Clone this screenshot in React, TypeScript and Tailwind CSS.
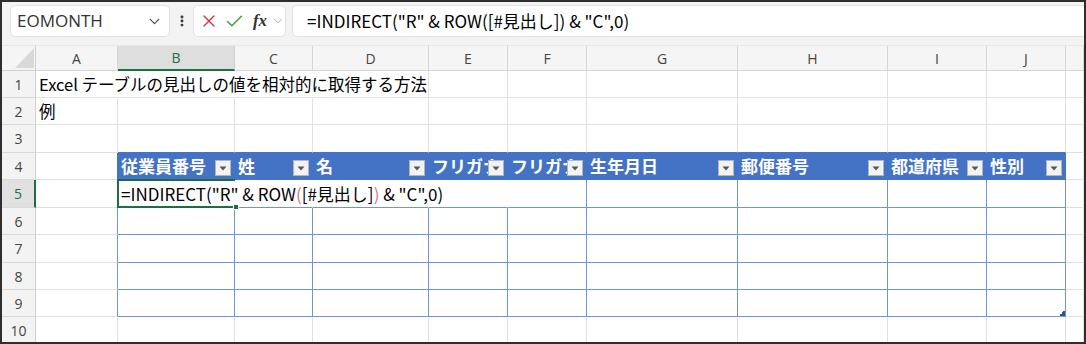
import { ChevronDown, X, Check, EllipsisVertical } from 'lucide-react';

const COLS = [
  { id: 'A', w: 'w-[82px]' },
  { id: 'B', w: 'w-[117px]' },
  { id: 'C', w: 'w-[78px]' },
  { id: 'D', w: 'w-[116px]' },
  { id: 'E', w: 'w-[79px]' },
  { id: 'F', w: 'w-[79px]' },
  { id: 'G', w: 'w-[151px]' },
  { id: 'H', w: 'w-[150px]' },
  { id: 'I', w: 'w-[99px]' },
  { id: 'J', w: 'w-[79px]' },
  { id: '', w: 'flex-1' },
];

const ROW_H = [
  'h-[27px]', 'h-[27px]', 'h-[28px]', 'h-[27px]', 'h-[28px]',
  'h-[27px]', 'h-[28px]', 'h-[27px]', 'h-[27px]', 'h-[27px]',
];

const HEADERS = ['従業員番号', '姓', '名', 'フリガナ', 'フリガナ', '生年月日', '郵便番号', '都道府県', '性別'];

function FilterButton() {
  return (
    <div className="absolute right-[3px] top-[7px] w-[16px] h-[16px] bg-[#f2f2f2] border border-[#b4b4b4] flex items-center justify-center">
      <svg width="8" height="5" viewBox="0 0 8 5">
        <polygon points="0.5,0.5 7.5,0.5 4,4.5" fill="#555" />
      </svg>
    </div>
  );
}

function borders(r: number, c: number) {
  const inTable = r >= 4 && r <= 9 && c >= 1 && c <= 9;
  let right = 'border-r-[#e1e1e1]';
  let bottom = 'border-b-[#e1e1e1]';
  if (inTable) {
    if (r === 4) {
      right = 'border-r-[#4472c4]';
      bottom = 'border-b-[#4472c4]';
    } else {
      right = 'border-r-[#7094d8]';
      bottom = 'border-b-[#7094d8]';
    }
  }
  if (c === 0 && r >= 4 && r <= 9) right = r === 4 ? 'border-r-[#4472c4]' : 'border-r-[#7094d8]';
  if (r === 3 && c >= 1 && c <= 9) bottom = 'border-b-[#4472c4]';
  if (r === 1 && c <= 2) right = 'border-r-transparent';
  if (r === 5 && c >= 1 && c <= 4) right = 'border-r-transparent';
  return right + ' ' + bottom;
}

function Cell({ r, c }: { r: number; c: number }) {
  const col = COLS[c];
  const base = `${col.w} shrink-0 h-full border-r border-b ${borders(r, c)} relative flex items-center`;

  if (r === 4 && c >= 1 && c <= 9) {
    return (
      <div className={`${base} bg-[#4472c4] overflow-hidden`}>
        <span className="pl-[3px] text-white font-bold text-[17px] whitespace-nowrap">{HEADERS[c - 1]}</span>
        <FilterButton />
      </div>
    );
  }

  if (r === 1 && c === 0) {
    return (
      <div className={`${base} z-10`}>
        <span className="pl-[3px] text-[16.5px] text-black whitespace-nowrap">Excel テーブルの見出しの値を相対的に取得する方法</span>
      </div>
    );
  }

  if (r === 2 && c === 0) {
    return (
      <div className={base}>
        <span className="pl-[3px] text-[16.5px] text-black">例</span>
      </div>
    );
  }

  if (r === 5 && c === 1) {
    return (
      <div className={`${base} z-10 bg-white`}>
        <span className="pl-[3px] text-[17px] text-black whitespace-nowrap">
          =INDIRECT("R" &amp; ROW<span className="text-[#e0708c]">(</span>[#見出し]<span className="text-[#e0708c]">)</span> &amp; "C",0)
        </span>
        <div className="absolute left-[-1px] top-[-1px] w-[118px] h-[29px] border-2 border-r-0 border-[#1d6f42] pointer-events-none">
          <div className="absolute right-[-4px] bottom-[-4px] w-[6px] h-[6px] bg-[#1d6f42] border border-white" />
        </div>
      </div>
    );
  }

  if (r === 9 && c === 9) {
    return (
      <div className={`${base} bg-white`}>
        <svg className="absolute right-[0px] bottom-[0px]" width="5" height="5" viewBox="0 0 5 5">
          <polygon points="5,0 5,5 0,5 0,3 2,3 2,1 3,1 3,0" fill="#2f4f9f" />
        </svg>
      </div>
    );
  }

  return <div className={`${base} ${r >= 5 && r <= 9 && c >= 1 && c <= 9 ? 'bg-white' : ''}`} />;
}

export default function App() {
  return (
    <div className="w-[1086px] h-[344px] border-2 border-[#2e2e2e] overflow-hidden bg-white flex flex-col font-['Noto_Sans_CJK_JP','Noto_Sans',sans-serif]">
      {/* formula bar */}
      <div className="h-[44px] shrink-0 bg-[#f3f3f3] flex items-start pt-[3px] pl-[8px] border-b border-[#e4e8ec]">
        <div className="w-[160px] h-[32px] bg-white border border-[#e2e2e2] rounded-[5px] flex items-center pl-[6px] pr-[6px] justify-between">
          <span className="text-[17px] text-[#333] font-['Open_Sans',sans-serif]">EOMONTH</span>
          <ChevronDown size={17} strokeWidth={1.6} className="text-[#444]" />
        </div>
        <div className="w-[23px] h-[32px] flex items-center justify-center text-[#333]">
          <EllipsisVertical size={14} strokeWidth={3} />
        </div>
        <div className="w-[93px] h-[32px] bg-white border border-[#e2e2e2] rounded-[5px] flex items-center pl-[5px]">
          <X size={20} strokeWidth={1.6} className="text-[#d13438]" />
          <Check size={21} strokeWidth={1.6} className="text-[#3c9b3c] ml-[5px]" />
          <span className="ml-[8px] text-[17px] text-[#333] font-bold italic font-['Liberation_Serif',serif]">fx</span>
          <ChevronDown size={14} strokeWidth={1.5} className="text-[#999] ml-[4px]" />
        </div>
        <div className="flex-1 h-[32px] ml-[6px] bg-white border border-r-0 border-[#e2e2e2] rounded-l-[5px] flex items-center pl-[14px]">
          <span className="text-[17px] text-black whitespace-nowrap">=INDIRECT("R" &amp; ROW([#見出し]) &amp; "C",0)</span>
        </div>
      </div>

      {/* column headers */}
      <div className="h-[25px] shrink-0 flex bg-[#f5f5f5]">
        <div className="w-[34px] shrink-0 h-full border-r border-b border-[#d0d0d0] relative">
          <svg className="absolute left-[13px] top-[2px]" width="19" height="20" viewBox="0 0 19 20">
            <polygon points="19,0 19,20 0,20" fill="#d9d9d9" />
          </svg>
        </div>
        {COLS.map((col, i) => (
          <div
            key={i}
            className={`${col.w} shrink-0 h-full flex items-center justify-center text-[14px] font-['Open_Sans',sans-serif] ${
              col.id === 'B'
                ? 'bg-[#dedede] text-[#1d6f42] border-r border-r-[#d0d0d0] border-b-2 border-b-[#1d6f42]'
                : 'text-[#444] border-r border-b border-[#d6d6d6]'
            }`}
          >
            {col.id}
          </div>
        ))}
      </div>

      {/* rows */}
      {ROW_H.map((h, ri) => {
        const r = ri + 1;
        return (
          <div key={r} className={`${h} shrink-0 flex`}>
            <div
              className={`w-[34px] shrink-0 h-full flex items-center justify-center text-[14px] font-['Open_Sans',sans-serif] border-b border-b-[#dadada] ${
                r === 5
                  ? 'bg-[#e1e1e1] text-[#1d6f42] border-r-2 border-r-[#1d6f42]'
                  : 'bg-[#f3f3f3] text-[#444] border-r border-r-[#d0d0d0]'
              }`}
            >
              {r}
            </div>
            {COLS.map((_, c) => (
              <Cell key={c} r={r} c={c} />
            ))}
          </div>
        );
      })}
    </div>
  );
}
